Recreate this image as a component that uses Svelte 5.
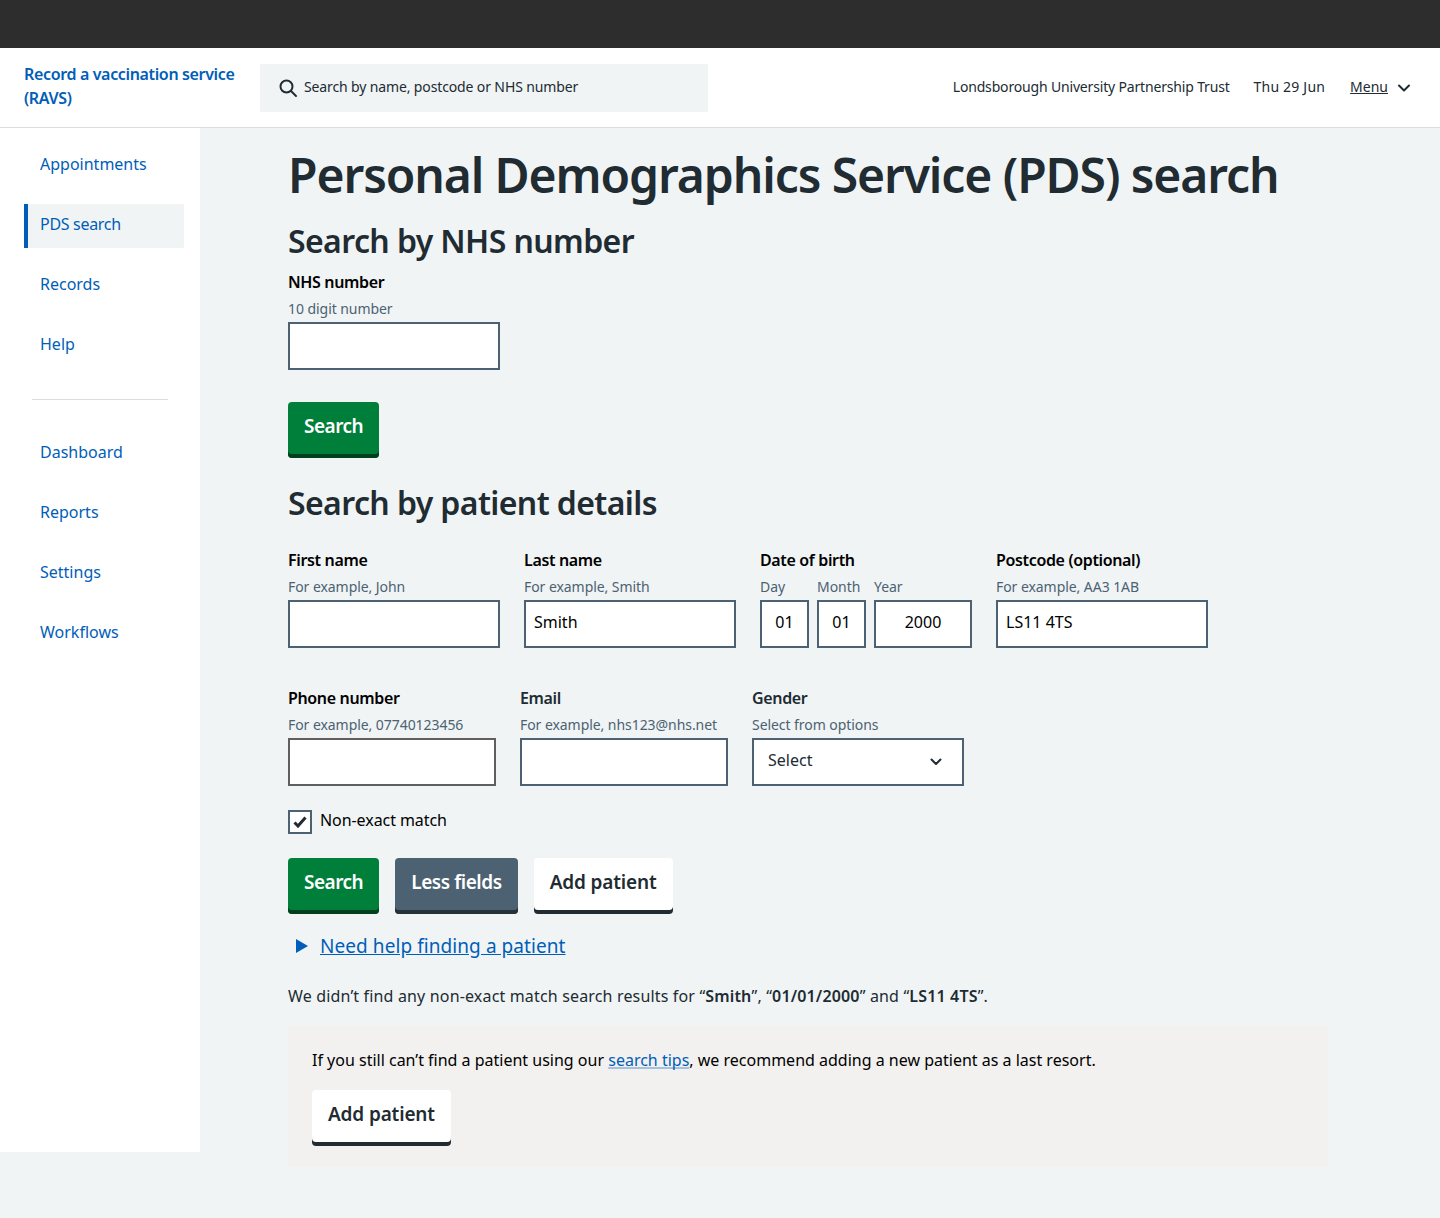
<script>
  const primaryNav = ['Appointments', 'PDS search', 'Records', 'Help'];
  const secondaryNav = ['Dashboard', 'Reports', 'Settings', 'Workflows'];
</script>

<div class="topbar"></div>

<header class="header">
  <a class="service" href="#top">Record a vaccination service (RAVS)</a>
  <div class="global-search">
    <svg width="20" height="20" viewBox="0 0 20 20" fill="none">
      <circle cx="8.5" cy="8.5" r="6" stroke="#212b32" stroke-width="2"/>
      <path d="M13 13L18 18" stroke="#212b32" stroke-width="2" stroke-linecap="round"/>
    </svg>
    <span class="global-search-text">Search by name, postcode or NHS number</span>
  </div>
  <div class="header-right">
    <span class="trust">Londsborough University Partnership Trust</span>
    <span class="date">Thu 29 Jun</span>
    <span class="menu">
      <span class="menu-label">Menu</span>
      <svg width="14" height="10" viewBox="0 0 14 10" fill="none">
        <path d="M2 2.500L7 7.500L12 2.500" stroke="#212b32" stroke-width="2" stroke-linecap="round" stroke-linejoin="round"/>
      </svg>
    </span>
  </div>
</header>

<div class="layout">
  <nav class="sidebar">
    {#each primaryNav as item}
      <a class="nav-item" class:active={item === 'PDS search'} href="#top">{item}</a>
    {/each}
    <hr class="nav-divider" />
    {#each secondaryNav as item}
      <a class="nav-item" href="#top">{item}</a>
    {/each}
  </nav>

  <main class="main">
    <h1>Personal Demographics Service (PDS) search</h1>

    <h2>Search by NHS number</h2>
    <div class="field nhs-field">
      <span class="label">NHS number</span>
      <span class="hint">10 digit number</span>
      <div class="input w212"></div>
    </div>
    <div class="actions first-actions">
      <button class="btn green">Search</button>
    </div>

    <h2 class="details-title">Search by patient details</h2>
    <div class="row row-one">
      <div class="field">
        <span class="label">First name</span>
        <span class="hint">For example, John</span>
        <div class="input w212"></div>
      </div>
      <div class="field">
        <span class="label">Last name</span>
        <span class="hint">For example, Smith</span>
        <div class="input w212">Smith</div>
      </div>
      <div class="field">
        <span class="label">Date of birth</span>
        <div class="dob">
          <div class="dob-part">
            <span class="hint">Day</span>
            <div class="input w49 centre">01</div>
          </div>
          <div class="dob-part">
            <span class="hint">Month</span>
            <div class="input w49 centre">01</div>
          </div>
          <div class="dob-part">
            <span class="hint">Year</span>
            <div class="input w98 centre">2000</div>
          </div>
        </div>
      </div>
      <div class="field">
        <span class="label">Postcode (optional)</span>
        <span class="hint">For example, AA3 1AB</span>
        <div class="input w212">LS11 4TS</div>
      </div>
    </div>

    <div class="row row-two">
      <div class="field">
        <span class="label">Phone number</span>
        <span class="hint">For example, 07740123456</span>
        <div class="input w208 grey-border"></div>
      </div>
      <div class="field">
        <span class="label soft">Email</span>
        <span class="hint">For example, nhs123@nhs.net</span>
        <div class="input w208"></div>
      </div>
      <div class="field">
        <span class="label soft">Gender</span>
        <span class="hint">Select from options</span>
        <div class="input w212 select">
          <span class="select-text">Select</span>
          <svg width="12" height="8" viewBox="0 0 12 8" fill="none">
            <path d="M1.500 1.500L6 6L10.500 1.500" stroke="#212b32" stroke-width="2" stroke-linecap="round" stroke-linejoin="round"/>
          </svg>
        </div>
      </div>
    </div>

    <div class="checkbox-row">
      <span class="checkbox">
        <svg width="14" height="12" viewBox="0 0 14 12" fill="none">
          <path d="M1.500 6.500L5 10L12.500 1.500" stroke="#212b32" stroke-width="3"/>
        </svg>
      </span>
      <span class="checkbox-text">Non-exact match</span>
    </div>

    <div class="actions">
      <button class="btn green">Search</button>
      <button class="btn slate">Less fields</button>
      <button class="btn white">Add patient</button>
    </div>

    <div class="details-link">
      <svg width="12" height="14" viewBox="0 0 12 14"><path d="M0 0L12 7L0 14Z" fill="#005eb8"/></svg>
      <a href="#top">Need help finding a patient</a>
    </div>

    <p class="no-results">
      We didn’t find any non-exact match search results for “<b>Smith</b>”, “<b>01/01/2000</b>” and “<b>LS11 4TS</b>”.
    </p>

    <section class="last-resort">
      <p>If you still can’t find a patient using our <a class="tips" href="#top">search tips</a>, we recommend adding a new patient as a last resort.</p>
      <button class="btn white">Add patient</button>
    </section>
  </main>
</div>

<style>
  :global(body) {
    margin: 0;
    background: #f0f4f5;
    color: #212b32;
    font-family: "Noto Sans", "Open Sans", sans-serif;
    min-height: 1218px;
  }

  .topbar {
    height: 48px;
    background: #2d2d2d;
  }

  .header {
    display: flex;
    align-items: center;
    height: 79px;
    padding: 0 29px 0 24px;
    background: #fff;
    border-bottom: 1px solid #d8dde0;
  }

  .service {
    width: 236px;
    padding-bottom: 4px;
    font-size: 16px;
    font-weight: 600;
    line-height: 24px;
    color: #005eb8;
    text-decoration: none;
    letter-spacing: -0.35px;
  }

  .global-search {
    display: flex;
    align-items: center;
    gap: 6px;
    width: 430px;
    height: 48px;
    padding-left: 18px;
    background: #f0f4f5;
    font-size: 14px;
  }

  .global-search-text {
    padding-bottom: 2px;
    letter-spacing: -0.13px;
  }

  .header-right {
    display: flex;
    align-items: center;
    gap: 24px;
    margin-left: auto;
    font-size: 14px;
  }

  .trust,
  .date {
    padding-bottom: 2px;
  }

  .trust {
    letter-spacing: -0.17px;
  }

  .date {
    letter-spacing: 0.2px;
  }

  .menu {
    display: flex;
    align-items: center;
    gap: 9px;
    margin-left: 1px;
  }

  .menu-label {
    padding-bottom: 2px;
    text-decoration: underline;
  }

  .layout {
    display: flex;
    align-items: flex-start;
  }

  .sidebar {
    box-sizing: border-box;
    width: 200px;
    height: 1024px;
    padding: 16px 16px 0 24px;
    background: #fff;
    flex-shrink: 0;
  }

  .nav-item {
    display: block;
    height: 44px;
    line-height: 40px;
    margin-bottom: 16px;
    padding-left: 16px;
    font-size: 16px;
    color: #005eb8;
    text-decoration: none;
  }

  .nav-item.active {
    padding-left: 12px;
    border-left: 4px solid #005eb8;
    background: #f0f4f5;
    letter-spacing: -0.3px;
  }

  .nav-divider {
    height: 1px;
    margin: 31px 16px 32px 8px;
    border: 0;
    background: #d8dde0;
  }

  .main {
    flex: 1;
    padding: 0 112px 0 88px;
  }

  h1 {
    margin: 19px 0 0;
    font-size: 48px;
    line-height: 56px;
    font-weight: 600;
    letter-spacing: -1.1px;
  }

  h2 {
    margin: 18px 0 0;
    font-size: 32px;
    line-height: 40px;
    font-weight: 600;
    letter-spacing: -0.6px;
  }

  .field {
    display: flex;
    flex-direction: column;
  }

  .label {
    font-size: 16px;
    font-weight: 600;
    line-height: 24px;
    color: #000;
    letter-spacing: -0.35px;
  }

  .label.soft {
    color: #212b32;
  }

  .hint {
    margin-top: 5px;
    font-size: 14px;
    line-height: 20px;
    color: #4c6272;
    letter-spacing: -0.06px;
  }

  .input {
    box-sizing: border-box;
    height: 48px;
    margin-top: 3px;
    padding: 0 8px;
    border: 2px solid #4c6272;
    background: #fff;
    font-size: 16px;
    line-height: 40px;
    color: #000;
  }

  .grey-border {
    border-color: #5f5f5f;
  }

  .w212 { width: 212px; }
  .w208 { width: 208px; }
  .w49 { width: 49px; }
  .w98 { width: 98px; }

  .centre {
    text-align: center;
  }

  .select {
    display: flex;
    align-items: center;
    justify-content: space-between;
    padding: 0 20px 0 14px;
    color: #212b32;
  }

  .select-text {
    padding-bottom: 4px;
  }

  .nhs-field {
    margin-top: 9px;
  }

  .first-actions {
    margin-top: 32px;
  }

  h2.details-title {
    margin-top: 25px;
  }

  .row {
    display: flex;
    gap: 24px;
  }

  .row-one {
    margin-top: 25px;
  }

  .row-two {
    margin-top: 38px;
  }

  .dob {
    display: flex;
    gap: 8px;
  }

  .dob-part {
    display: flex;
    flex-direction: column;
  }

  .checkbox-row {
    display: flex;
    align-items: center;
    gap: 8px;
    margin-top: 24px;
    font-size: 16px;
    height: 24px;
    color: #000;
  }

  .checkbox-text {
    padding-bottom: 4px;
    letter-spacing: -0.07px;
  }

  .checkbox {
    box-sizing: border-box;
    display: flex;
    align-items: center;
    justify-content: center;
    width: 24px;
    height: 24px;
    border: 2px solid #4c6272;
    background: #fff;
  }

  .actions {
    display: flex;
    gap: 16px;
  }

  .checkbox-row + .actions {
    margin-top: 24px;
  }

  .btn {
    box-sizing: border-box;
    height: 56px;
    padding: 0 16px 8px;
    border: 0;
    border-radius: 4px;
    font-family: inherit;
    font-size: 19px;
    font-weight: 600;
  }

  .green {
    background: #007f3b;
    color: #fff;
    box-shadow: inset 0 -4px 0 #00401e;
    letter-spacing: -0.5px;
  }

  .slate {
    background: #4c6272;
    color: #fff;
    box-shadow: inset 0 -4px 0 #263139;
    letter-spacing: -0.45px;
  }

  .white {
    background: #fff;
    color: #212b32;
    box-shadow: inset 0 -4px 0 #212b32;
    letter-spacing: -0.15px;
  }

  .details-link {
    display: flex;
    align-items: center;
    gap: 12px;
    margin-top: 18px;
    padding-left: 8px;
    font-size: 19px;
    line-height: 28px;
    letter-spacing: 0.07px;
  }

  a {
    color: #005eb8;
  }

  .no-results {
    margin: 24px 0 0;
    font-size: 16px;
    line-height: 24px;
    letter-spacing: 0.16px;
  }

  .no-results b {
    font-weight: 600;
  }

  .last-resort {
    box-sizing: border-box;
    width: 1040px;
    height: 141px;
    margin-top: 18px;
    padding: 22px 24px 0;
    background: #f2f1ef;
  }

  .last-resort p {
    margin: 0 0 18px;
    font-size: 16px;
    line-height: 24px;
    color: #000;
  }

  .tips {
    text-decoration-color: #a3c1e2;
    text-decoration-thickness: 2px;
    text-decoration-skip-ink: none;
  }
</style>
